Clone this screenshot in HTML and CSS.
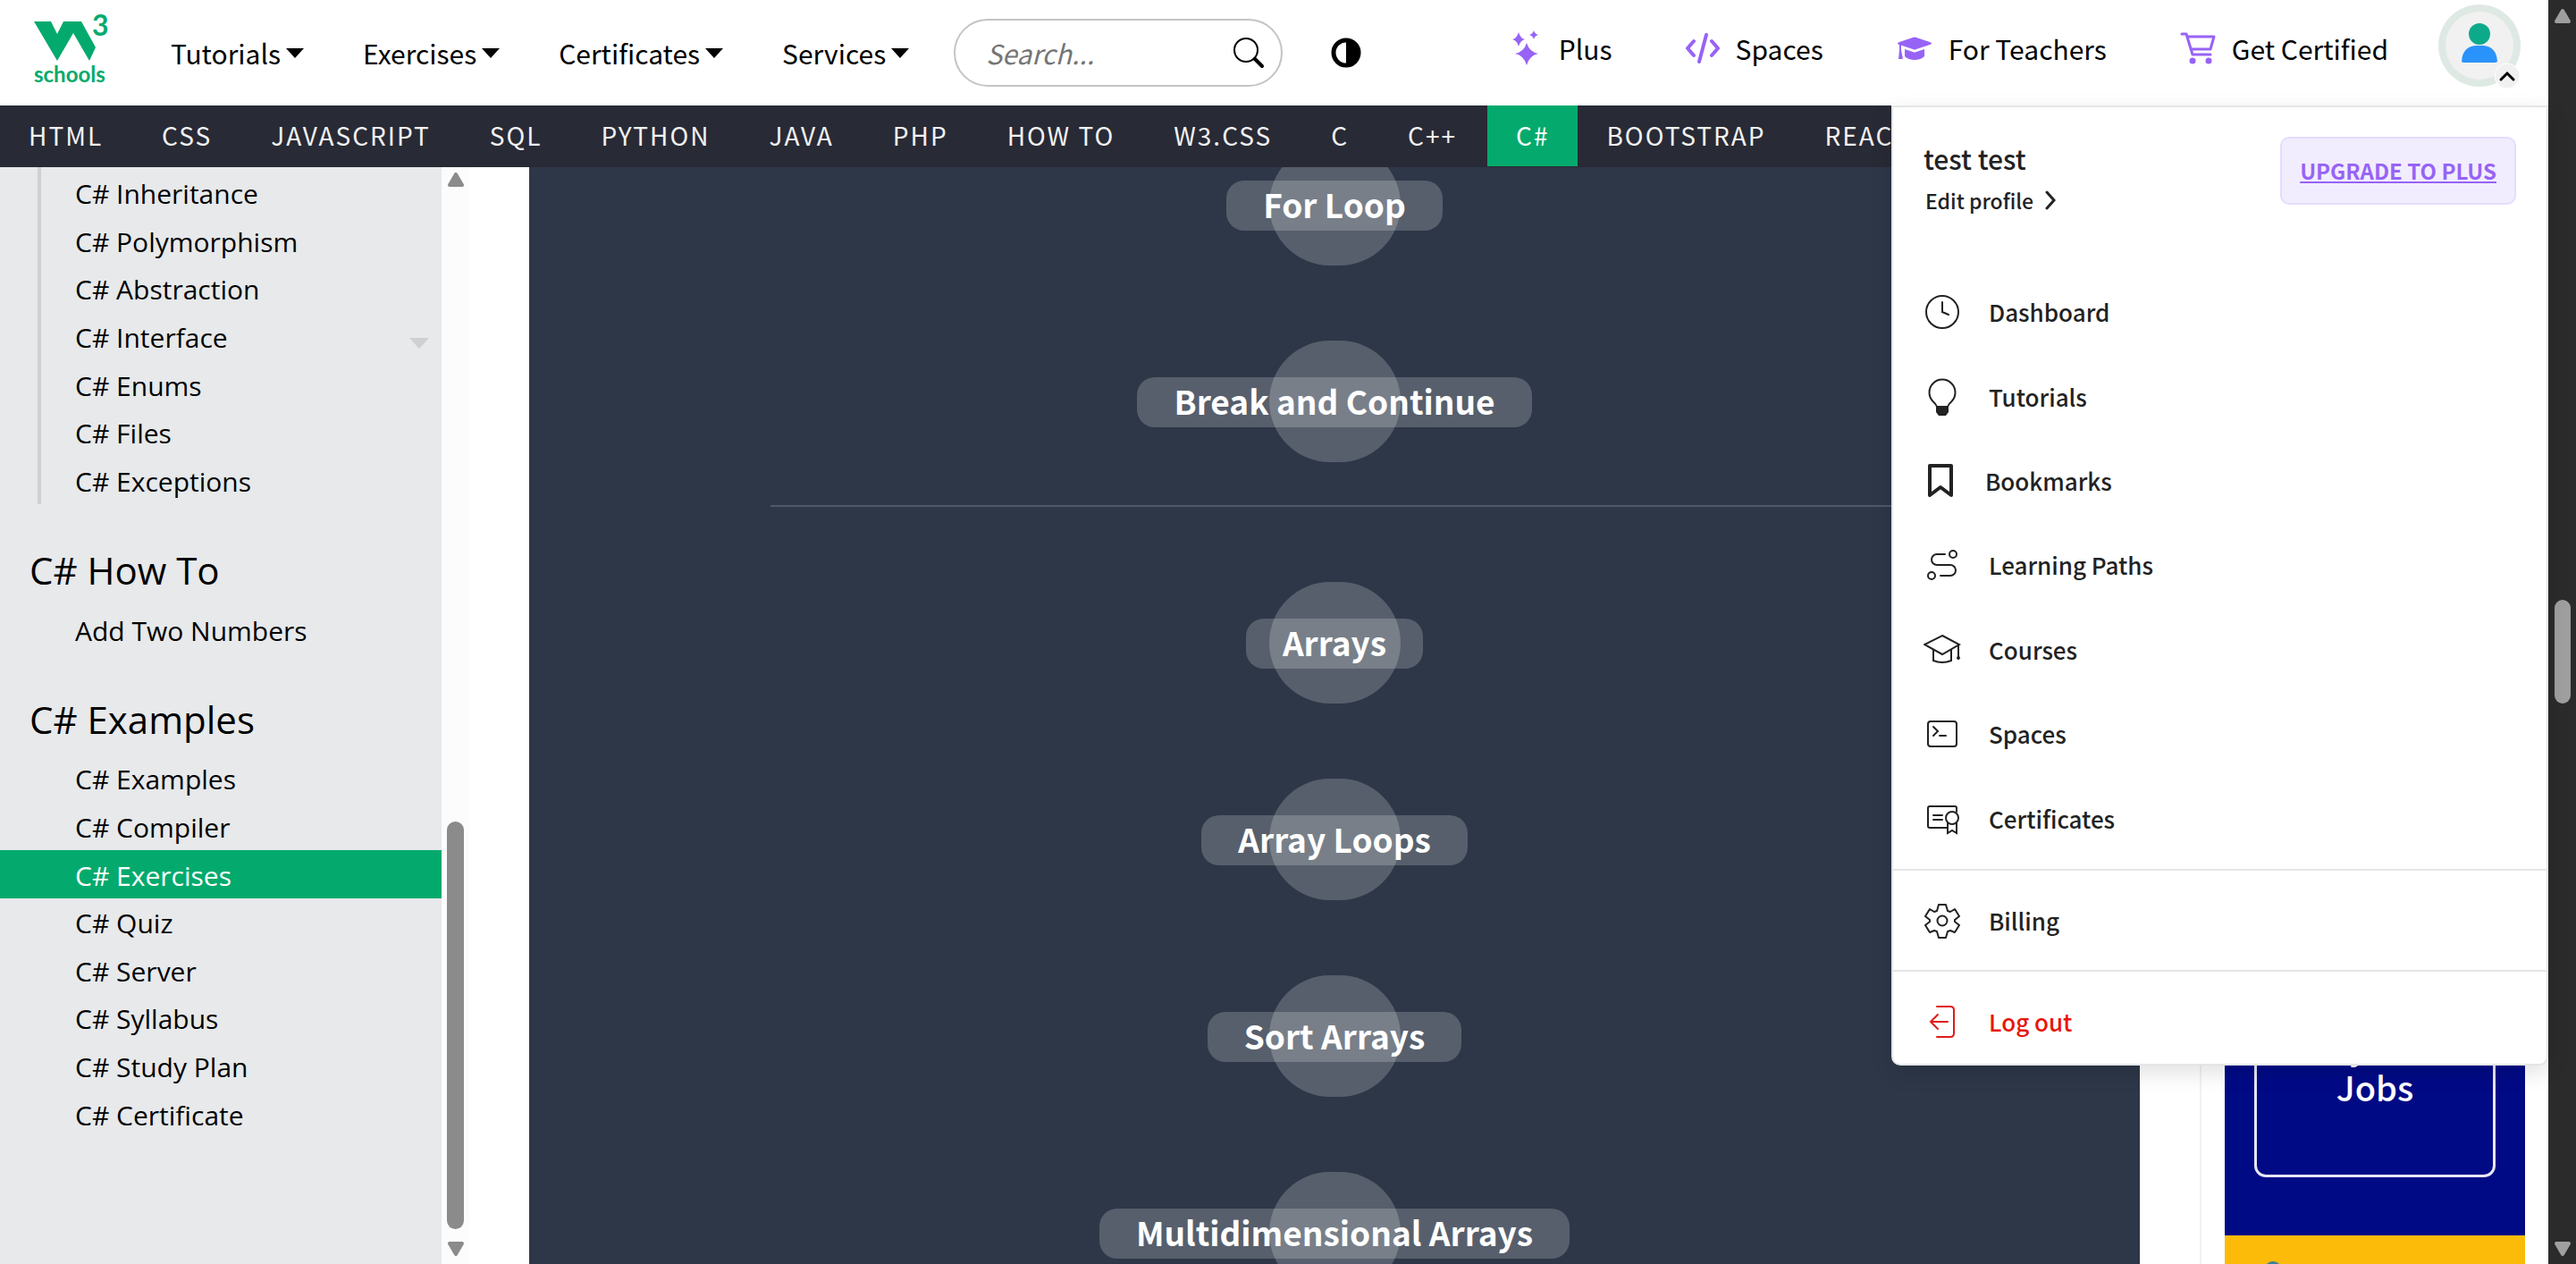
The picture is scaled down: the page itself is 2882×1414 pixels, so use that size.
FILE: index.html
```html
<!DOCTYPE html>
<html lang="en">
<head>
<meta charset="utf-8">
<title>C# Exercises</title>
<link rel="stylesheet" href="styles.css">
</head>
<body>
<div class="shell">
  <div class="page">
    <header class="topbar">
      <a class="logo" href="#" aria-label="Home">
        <svg width="84" height="84" viewBox="0 0 84 84">
          <path fill="#04aa6d" d="M0 7h19l7 14 7-14h20l16 29-7 15-18-31-18 31z"/>
          <text x="65" y="23" class="logo-three">3</text>
          <text x="0" y="75" class="logo-name">schools</text>
        </svg>
      </a>
      <nav class="menus">
        <button class="menu">Tutorials <i class="caret"></i></button>
        <button class="menu">Exercises <i class="caret"></i></button>
        <button class="menu">Certificates <i class="caret"></i></button>
        <button class="menu">Services <i class="caret"></i></button>
      </nav>
      <form class="search">
        <input type="text" placeholder="Search..." aria-label="Search">
        <button type="button" class="search-btn" aria-label="Go">
          <svg width="36" height="36" viewBox="0 0 36 36" fill="none" stroke="#000"><circle cx="15" cy="15" r="13" stroke-width="2"/><path d="M25 25l8 8" stroke-width="4" stroke-linecap="round"/></svg>
        </button>
      </form>
      <button class="contrast" aria-label="Dark mode">
        <svg width="34" height="34" viewBox="0 0 34 34"><circle cx="17" cy="17" r="14" fill="none" stroke="#000" stroke-width="5"/><path d="M17 2a15 15 0 0 1 0 30z"/></svg>
      </button>
      <nav class="quick">
        <a href="#">
          <svg width="34" height="40" viewBox="0 0 34 40" fill="#9763f6"><path d="M16 14q3 10 13 12-10 2-13 13-3-11-13-13 10-2 13-12z"/><path d="M7 2q2 7 7 8-5 1-7 8-2-7-7-8 5-1 7-8z"/><path d="M24 0q1 4 5 5-4 1-5 5-1-4-5-5 4-1 5-5z"/></svg>
          Plus</a>
        <a href="#">
          <svg width="38" height="34" viewBox="0 0 38 34" fill="none" stroke="#9763f6" stroke-width="4" stroke-linecap="round" stroke-linejoin="round"><path d="M9 9l-7 8 7 8M29 9l7 8-7 8M23 2l-8 30"/></svg>
          Spaces</a>
        <a href="#">
          <svg width="40" height="26" viewBox="0 0 40 26" fill="#9763f6"><path d="M18 1q2-1 4 0l15 5q4 2 0 3l-15 5q-2 1-4 0L3 9q-4-1 0-3z"/><path d="M9 14l9 3q2 1 4 0l9-3v8q-4 4-11 4t-11-4z"/><path d="M3 9h2v6l2 10H2l1-10z"/></svg>
          For Teachers</a>
        <a href="#">
          <svg width="40" height="36" viewBox="0 0 40 36" fill="none" stroke="#9763f6" stroke-width="3" stroke-linejoin="round" stroke-linecap="round"><path d="M2 2h5l7 23h20M8 5h30l-4 14H12"/><circle cx="14" cy="32" r="2" fill="#9763f6"/><circle cx="32" cy="32" r="2" fill="#9763f6"/></svg>
          Get Certified</a>
      </nav>
      <button class="avatar" aria-label="Account">
        <svg width="94" height="96" viewBox="0 0 94 96">
          <circle cx="47" cy="48" r="46" fill="#dfe9e4"/>
          <circle cx="47" cy="48" r="38" fill="#f1f1f1"/>
          <circle cx="47" cy="35" r="12" fill="#0caa8b"/>
          <path d="M27 66q1-17 16-18h8q15 1 16 18l-2 1H29z" fill="#2a93fb"/>
          <circle cx="78" cy="82" r="14" fill="#f1f1f1" stroke="#fff" stroke-width="1"/>
          <path d="M71 86l7-7 7 7" fill="none" stroke="#000" stroke-width="3" stroke-linecap="round"/>
        </svg>
      </button>
    </header>

    <nav class="subnav">
      <a href="#">HTML</a><a href="#">CSS</a><a href="#">JAVASCRIPT</a><a href="#">SQL</a><a href="#">PYTHON</a><a href="#">JAVA</a><a href="#">PHP</a><a href="#">HOW TO</a><a href="#">W3.CSS</a><a href="#">C</a><a href="#">C++</a><a href="#" class="current">C#</a><a href="#">BOOTSTRAP</a><a href="#">REACT</a>
    </nav>

    <div class="content">
      <aside class="sidebar">
        <div class="links links-seven links-nested">
          <a href="#">C# Inheritance</a>
          <a href="#">C# Polymorphism</a>
          <a href="#">C# Abstraction</a>
          <a href="#" class="has-more">C# Interface <i class="more"></i></a>
          <a href="#">C# Enums</a>
          <a href="#">C# Files</a>
          <a href="#">C# Exceptions</a>
        </div>
        <h2>C# How To</h2>
        <div class="links">
          <a href="#">Add Two Numbers</a>
        </div>
        <h2>C# Examples</h2>
        <div class="links links-eight">
          <a href="#">C# Examples</a>
          <a href="#">C# Compiler</a>
          <a href="#" class="active">C# Exercises</a>
          <a href="#">C# Quiz</a>
          <a href="#">C# Server</a>
          <a href="#">C# Syllabus</a>
          <a href="#">C# Study Plan</a>
          <a href="#">C# Certificate</a>
        </div>
      </aside>
      <div class="scroll side-scroll">
        <svg width="20" height="16" viewBox="0 0 20 16"><path d="M10 2l7 12H3z"/></svg>
        <span class="thumb"></span>
        <svg width="20" height="16" viewBox="0 0 20 16"><path d="M3 2h14l-7 12z"/></svg>
      </div>

      <main class="topics">
        <section class="group group-first">
          <a class="topic" href="#"><span>For Loop</span></a>
          <a class="topic" href="#"><span>Break and Continue</span></a>
        </section>
        <hr>
        <section class="group">
          <a class="topic" href="#"><span>Arrays</span></a>
          <a class="topic" href="#"><span>Array Loops</span></a>
          <a class="topic" href="#"><span>Sort Arrays</span></a>
          <a class="topic" href="#"><span>Multidimensional Arrays</span></a>
        </section>
      </main>

      <aside class="rail">
        <a class="ad" href="#">
          <span class="ad-blue"><span class="ad-frame">Cyber<br>Jobs</span></span>
          <span class="ad-yellow"><i></i></span>
        </a>
      </aside>
    </div>

    <div class="account">
      <div class="account-head">
        <div>
          <div class="user">test test</div>
          <a class="edit" href="#">Edit profile <svg width="12" height="22" viewBox="0 0 12 22" fill="none" stroke="#222" stroke-width="3" stroke-linecap="round"><path d="M2 2l8 9-8 9"/></svg></a>
        </div>
        <a class="upgrade" href="#">UPGRADE TO PLUS</a>
      </div>
      <div class="account-list">
        <a href="#"><svg viewBox="0 0 42 42"><circle cx="21" cy="21" r="18"/><path d="M21 10v11l7 3"/></svg>Dashboard</a>
        <a href="#"><svg viewBox="0 0 42 42"><path d="M15 32q-1-3-4.500-6a14.500 14.500 0 1 1 21 0q-3.500 3-4.500 6"/><path d="M14 31h14v7l-3 4h-8l-3-4z" fill="#222" stroke="none"/></svg>Tutorials</a>
        <a href="#" class="bookmark"><svg viewBox="0 0 38 42"><path stroke-width="4" stroke-linejoin="round" d="M7 4h24v33l-12-9-12 9z"/></svg>Bookmarks</a>
        <a href="#"><svg viewBox="0 0 42 42"><circle cx="33" cy="9" r="4"/><circle cx="9" cy="33" r="4"/><path d="M24 9h-9a6 6 0 0 0 0 12h15a6 6 0 0 1 0 12H19"/></svg>Learning Paths</a>
        <a href="#"><svg viewBox="0 0 42 42"><path d="M21 5l19 10-19 11L1 15zM11 21v12q10 4 20 0V21M39 16v14"/><circle cx="39" cy="30" r="1"/></svg>Courses</a>
        <a href="#"><svg viewBox="0 0 42 42"><rect x="5" y="7" width="32" height="28" rx="3"/><path d="M11 13l5 5-5 5M18 23h7"/></svg>Spaces</a>
        <a href="#"><svg viewBox="0 0 42 42"><path d="M27 31H7q-2 0-2-2V9q0-2 2-2h28q2 0 2 2v4M11 17h10M11 22h10"/><circle cx="32" cy="20" r="7"/><path d="M27 26v11l5-3 5 3V26"/></svg>Certificates</a>
      </div>
      <div class="account-row">
        <a href="#"><svg viewBox="0 0 42 42"><circle cx="21" cy="21" r="5.500"/><path stroke-linejoin="round" d="M17 3h8l2 7 3 1 5-3 5 8-5 4v2l5 4-5 8-5-2-3 1-2 7h-8l-2-7-3-1-5 2-5-8 5-4v-2l-5-4 5-8 5 3 3-1z"/></svg>Billing</a>
      </div>
      <div class="account-row">
        <a href="#" class="logout"><svg viewBox="0 0 42 42"><path d="M15 4h15q4 0 4 4v26q0 4-4 4H15M8 21h19M16 13l-8 8 8 8"/></svg>Log out</a>
      </div>
    </div>
  </div>

  <div class="scroll page-scroll">
    <svg width="22" height="18" viewBox="0 0 22 18"><path d="M11 3l7 12H4z"/></svg>
    <span class="thumb"></span>
    <svg width="22" height="18" viewBox="0 0 22 18"><path d="M4 3h14l-7 12z"/></svg>
  </div>
</div>
</body>
</html>
```
FILE: styles.css
```css
* { box-sizing: border-box; }

body {
  margin: 0;
  font-family: "Noto Sans CJK SC", "Noto Sans", sans-serif;
  font-size: 30px;
  color: #000;
  background: #fff;
}

a { color: inherit; text-decoration: none; }

button {
  padding: 0;
  border: 0;
  background: none;
  font: inherit;
  color: inherit;
}

svg { display: block; flex: none; }

.shell { display: flex; height: 100vh; overflow: hidden; }

.page {
  position: relative;
  display: flex;
  flex: 1;
  flex-direction: column;
  min-width: 0;
}

/* Top bar */
.topbar {
  display: flex;
  flex: none;
  align-items: center;
  height: 118px;
  padding: 0 30px 0 38px;
}

.logo { margin-right: 69px; }
.logo svg { overflow: visible; }
.logo-three { font: 700 32px "Lato", sans-serif; fill: #04aa6d; }
.logo-name { font: 700 24px "Lato", sans-serif; fill: #04aa6d; }

.menus { display: flex; gap: 66px; }

.menu { display: flex; align-items: center; gap: 6px; line-height: 40px; white-space: nowrap; }

.caret {
  border: solid transparent;
  border-width: 11px 10px 0;
  border-top-color: #000;
}

.search {
  display: flex;
  align-items: center;
  width: 368px;
  height: 76px;
  margin-left: 50px;
  padding: 0 18px 0 34px;
  border: 2px solid #c4c4c4;
  border-radius: 38px;
}

.search input {
  flex: 1;
  min-width: 0;
  padding: 0;
  border: 0;
  outline: 0;
  background: none;
  font: italic 30px/40px "Noto Sans CJK SC", sans-serif;
}

.search input::placeholder { color: #757575; opacity: 1; }

.contrast { margin-left: 54px; }

.quick {
  display: flex;
  flex: 1;
  justify-content: flex-end;
  gap: 82px;
  margin-right: 55px;
  padding-bottom: 10px;
}

.quick a { display: flex; align-items: center; gap: 18px; line-height: 40px; white-space: nowrap; }

.avatar { align-self: flex-start; padding-top: 3px; }

/* Language bar */
.subnav {
  display: flex;
  flex: none;
  height: 69px;
  overflow: hidden;
  padding-bottom: 1px;
  background: #282a35;
  color: #f1f1f1;
  font-size: 28px;
  line-height: 66px;
  letter-spacing: 2px;
}

.subnav a { flex: none; padding: 0 34px 0 32px; }
.subnav .current { padding: 0 32px; background: #04aa6d; color: #fff; }

/* Columns under the bars */
.content { display: flex; flex: 1; min-height: 0; overflow: hidden; }

.sidebar {
  flex: none;
  width: 494px;
  overflow: hidden;
  background: #e7e9eb;
  font: 30px/48px "Open Sans", "Noto Sans", sans-serif;
}

.sidebar h2 {
  margin: 0;
  padding: 44px 33px 9px;
  font-size: 42px;
  font-weight: 400;
  line-height: 60px;
}

.links { display: grid; grid-auto-rows: 1fr; min-height: 54px; }
.links-seven { min-height: 377px; padding-top: 2px; }
.links-eight { min-height: 429px; }
.links a { display: flex; align-items: center; padding: 3px 0 0 84px; }
.links-nested { margin-left: 42px; border-left: 4px solid #ced0d2; }
.links-nested a { padding-left: 38px; }
.links .active { background: #04aa6d; color: #fff; }
.links .has-more { justify-content: space-between; padding-right: 14px; }

.more {
  margin-top: 12px;
  border: solid transparent;
  border-width: 12px 11px 0;
  border-top-color: #ced0d2;
}

.scroll {
  display: flex;
  flex: none;
  flex-direction: column;
  align-items: center;
  width: 31px;
}

.side-scroll { padding: 6px 0 9px; background: #fcfcfc; fill: #8b8b8b; stroke: #8b8b8b; stroke-width: 4px; stroke-linejoin: round; }
.side-scroll .thumb { flex: none; width: 19px; height: 456px; margin: auto 0 14px; border-radius: 10px; background: #8b8b8b; }

.page-scroll { padding: 9px 0 8px; background: #2b2b2b; fill: #9f9f9f; stroke: #9f9f9f; stroke-width: 4px; stroke-linejoin: round; }
.page-scroll .thumb { flex: none; width: 18px; height: 116px; margin: calc(46vh - 6px) 0 auto; border-radius: 9px; background: #9f9f9f; }

/* Exercise topics */
.topics {
  flex: 1;
  min-width: 0;
  margin: 0 67px;
  overflow: hidden;
  background: #2d3748;
}

.group { display: flex; flex-direction: column; align-items: center; gap: 84px; }
.group-first { margin-top: -26px; }

.topic {
  display: flex;
  flex: none;
  align-items: center;
  justify-content: center;
  width: 147px;
  height: 136px;
  padding-top: 2px;
  border-radius: 68px;
  background: rgba(255, 255, 255, .2);
  color: #fff;
  font-size: 37px;
  font-weight: 700;
  line-height: 52px;
  white-space: nowrap;
}

.topic span {
  flex: none;
  padding: 0 41px 4px;
  border-radius: 20px;
  background: rgba(255, 255, 255, .2);
}

.topics hr {
  width: 70%;
  height: 2px;
  margin: 48px auto 84px;
  border: 0;
  background: #4f5a67;
}

/* Right rail */
.rail { display: flex; flex: none; flex-direction: column; width: 390px; padding: 0 26px; border-left: 2px solid #f1f1f1; }
.ad { display: flex; flex: 1; flex-direction: column; justify-content: flex-end; }

.ad-blue { display: flex; flex: 1; flex-direction: column; padding: 600px 33px 65px; background: #000a85; color: #fff; }
.ad-frame {
  display: flex;
  flex: 1;
  flex-direction: column;
  justify-content: flex-end;
  padding-bottom: 75px;
  border: 3px solid #e6e6f5;
  border-radius: 13px;
  font-size: 38px;
  font-weight: 500;
  line-height: 46px;
  text-align: center;
}
.ad-yellow { height: 32px; overflow: hidden; background: #fcbb08; }
.ad-yellow i { display: block; width: 20px; height: 20px; margin: 29px 0 0 44px; border-radius: 10px; background: #3c7f9c; }

/* Account menu, hung over the columns */
.account {
  position: absolute;
  top: 118px;
  right: 0;
  width: 735px;
  border: 2px solid #e4e5e7;
  border-radius: 0 0 10px 10px;
  background: #fff;
  color: #222;
  font-size: 26px;
  font-weight: 500;
  box-shadow: 0 8px 24px rgba(0, 0, 0, .12);
}

.account-head { display: flex; justify-content: space-between; padding: 33px 34px 0; height: 182px; }
.user { margin-top: 4px; font-size: 30px; line-height: 40px; }
.edit { display: flex; align-items: center; gap: 13px; padding: 3px 0 0 2px; font-size: 23px; line-height: 48px; }

.upgrade {
  height: 76px;
  padding: 0 20px;
  border: 2px solid #e5dcfd;
  border-radius: 10px;
  background: #f2edfe;
  color: #9763f6;
  font-size: 24px;
  font-weight: 700;
  line-height: 72px;
  text-decoration: underline;
}

.account-list { display: grid; grid-auto-rows: 1fr; height: 670px; padding-bottom: 9px; }
.account-list a, .account-row a { display: flex; align-items: center; gap: 31px; padding-left: 34px; line-height: 40px; white-space: nowrap; }
.account-row { border-top: 2px solid #e4e5e7; }
.account-row a { height: 111px; }
.account-list svg, .account-row svg { width: 42px; height: 42px; fill: none; stroke: #222; stroke-width: 2px; stroke-linecap: round; }
.account-list .bookmark svg { width: 38px; }
.account .logout { height: 103px; padding-top: 8px; color: #e81607; }
.account .logout svg { stroke: #e01b1b; }
```
